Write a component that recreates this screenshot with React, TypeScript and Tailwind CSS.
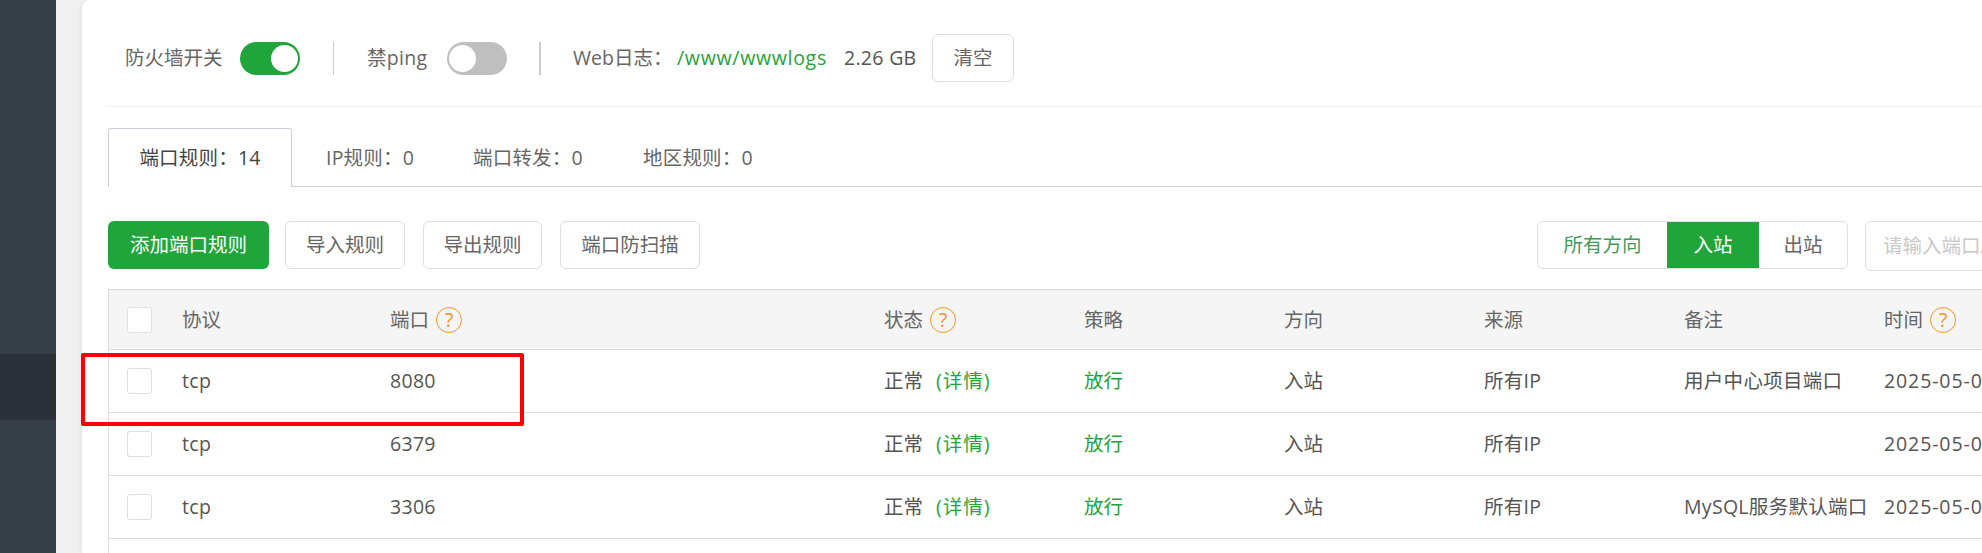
import React from "react";

const rows = [
  { port: "8080", remark: "用户中心项目端口" },
  { port: "6379", remark: "" },
  { port: "3306", remark: "MySQL服务默认端口" },
];

function Help() {
  return (
    <span className="ml-[7px] flex h-[26px] w-[26px] shrink-0 items-center justify-center rounded-full border border-[#f7931e] text-[20px] leading-none text-[#f7931e]">
      ?
    </span>
  );
}

function Toggle({ on }: { on: boolean }) {
  return (
    <span
      className={
        on
          ? "flex h-[33px] w-[60px] items-center justify-end rounded-full bg-[#20a53a] pr-[2px]"
          : "flex h-[33px] w-[60px] items-center justify-start rounded-full bg-[#bfbfbf] pl-[2px]"
      }
    >
      <span className="h-[27px] w-[27px] rounded-full bg-white" />
    </span>
  );
}

function OutlineButton({ label, width }: { label: string; width: string }) {
  return (
    <button className={`flex h-[48px] shrink-0 items-center justify-center rounded-[6px] border border-[#dcdfe6] bg-white text-[#666] ${width}`}>
      {label}
    </button>
  );
}

function Tab({ label, width }: { label: string; width: string }) {
  return <div className={`flex h-[59px] items-center tracking-[0.2px] text-[#666] ${width}`}>{label}</div>;
}

function Checkbox() {
  return <span className="block h-[26px] w-[25px] rounded-[3px] border border-[#dcdfe6] bg-white" />;
}

export default function App() {
  return (
    <div className="relative flex h-[553px] w-[1982px] overflow-hidden bg-[#f0f0f0] font-['Open_Sans','Noto_Sans_CJK_SC',sans-serif] text-[19.5px] text-[#555]">
      <aside className="w-14 shrink-0 bg-[#333e47] pt-[354px]">
        <div className="h-[66px] bg-[#2b3139]" />
      </aside>

      <main className="ml-[26px] min-w-0 flex-1 overflow-hidden rounded-tl-[8px] bg-white pl-[26px] shadow-[0_0_6px_rgba(0,0,0,0.08)]">
        <div className="w-[2000px]">
          {/* top switches */}
          <div className="flex h-[107px] items-center border-b border-[#eeeeee] pt-[10px] pl-[17px]">
            <span className="w-[115px] text-[#666]">防火墙开关</span>
            <Toggle on />
            <span className="ml-[33px] h-[33px] w-px bg-[#cccccc]" />
            <span className="ml-[33px] w-[80px] tracking-[0.3px] text-[#666]">禁ping</span>
            <Toggle on={false} />
            <span className="ml-[32px] h-[33px] w-[2px] bg-[#cccccc]" />
            <span className="ml-[32px] w-[104px] text-[#666]">Web日志：</span>
            <span className="w-[167px] tracking-[0.7px] text-[#20a53a]">/www/wwwlogs</span>
            <span className="w-[88px] tracking-[0.3px]">2.26 GB</span>
            <OutlineButton label="清空" width="w-[82px]" />
          </div>

          {/* tabs */}
          <div className="mt-[21px] flex h-[59px] border-b border-[#cfcfdc]">
            <div className="flex h-[59px] w-[184px] items-center justify-center rounded-t-[3px] border border-b-0 border-[#cfcfdc] bg-white tracking-[0.2px] text-[#444]">
              端口规则：14
            </div>
            <div className="flex pl-[34px]">
              <Tab label="IP规则：0" width="w-[147px]" />
              <Tab label="端口转发：0" width="w-[170px]" />
              <Tab label="地区规则：0" width="w-[160px]" />
            </div>
          </div>

          {/* toolbar */}
          <div className="mt-[34px] flex h-[50px] items-start">
            <button className="flex h-[48px] w-[161px] shrink-0 items-center justify-center rounded-[6px] bg-[#20a53a] text-white">添加端口规则</button>
            <div className="ml-4 flex gap-[18px]">
              <OutlineButton label="导入规则" width="w-[120px]" />
              <OutlineButton label="导出规则" width="w-[119px]" />
              <OutlineButton label="端口防扫描" width="w-[140px]" />
            </div>
            <div className="ml-[837px] flex h-[48px] shrink-0 overflow-hidden rounded-[6px] border border-[#dcdfe6]">
              <span className="flex w-[129px] items-center justify-center text-[#3f9a5a]">所有方向</span>
              <span className="flex w-[92px] items-center justify-center bg-[#20a53a] text-white">入站</span>
              <span className="flex w-[88px] items-center justify-center text-[#666]">出站</span>
            </div>
            <div className="ml-[17px] flex h-[50px] w-[200px] shrink-0 items-center rounded-[6px] border border-[#dcdfe6] pl-[17px] whitespace-nowrap text-[#c8c8c8]">
              请输入端口/备注
            </div>
          </div>

          {/* rule table */}
          <div className="mt-[18px] border-t border-l border-[#dddddd]">
            <div className="flex h-[60px] items-center border-b border-[#dddddd] bg-[#f5f5f5] text-[#666]">
              <span className="w-[73px] pl-[18px]"><Checkbox /></span>
              <span className="w-[208px]">协议</span>
              <span className="flex w-[494px] items-center">端口<Help /></span>
              <span className="flex w-[200px] items-center">状态<Help /></span>
              <span className="w-[200px]">策略</span>
              <span className="w-[200px]">方向</span>
              <span className="w-[200px]">来源</span>
              <span className="w-[200px]">备注</span>
              <span className="flex items-center">时间<Help /></span>
            </div>
            {rows.map((row) => (
              <div key={row.port} className="flex h-[63px] items-center border-b border-[#dddddd]">
                <span className="w-[73px] pl-[18px]"><Checkbox /></span>
                <span className="w-[208px] tracking-[0.3px]">tcp</span>
                <span className="w-[494px] tracking-[0.3px]">{row.port}</span>
                <span className="w-[200px]">正常<span className="ml-[13px] tracking-[1px] text-[#20a53a]">(详情)</span></span>
                <span className="w-[200px] text-[#20a53a]">放行</span>
                <span className="w-[200px]">入站</span>
                <span className="w-[200px] tracking-[0.3px]">所有IP</span>
                <span className="w-[200px] whitespace-nowrap tracking-[0.3px]">{row.remark}</span>
                <span className="tracking-[0.9px]">2025-05-0</span>
              </div>
            ))}
            <div className="h-[20px]" />
          </div>
        </div>
      </main>

      {/* red annotation drawn over the screenshot */}
      <div className="absolute left-[81px] top-[353px] h-[73px] w-[443px] rounded-[2px] border-[4px] border-[#ff0000]" />
    </div>
  );
}
